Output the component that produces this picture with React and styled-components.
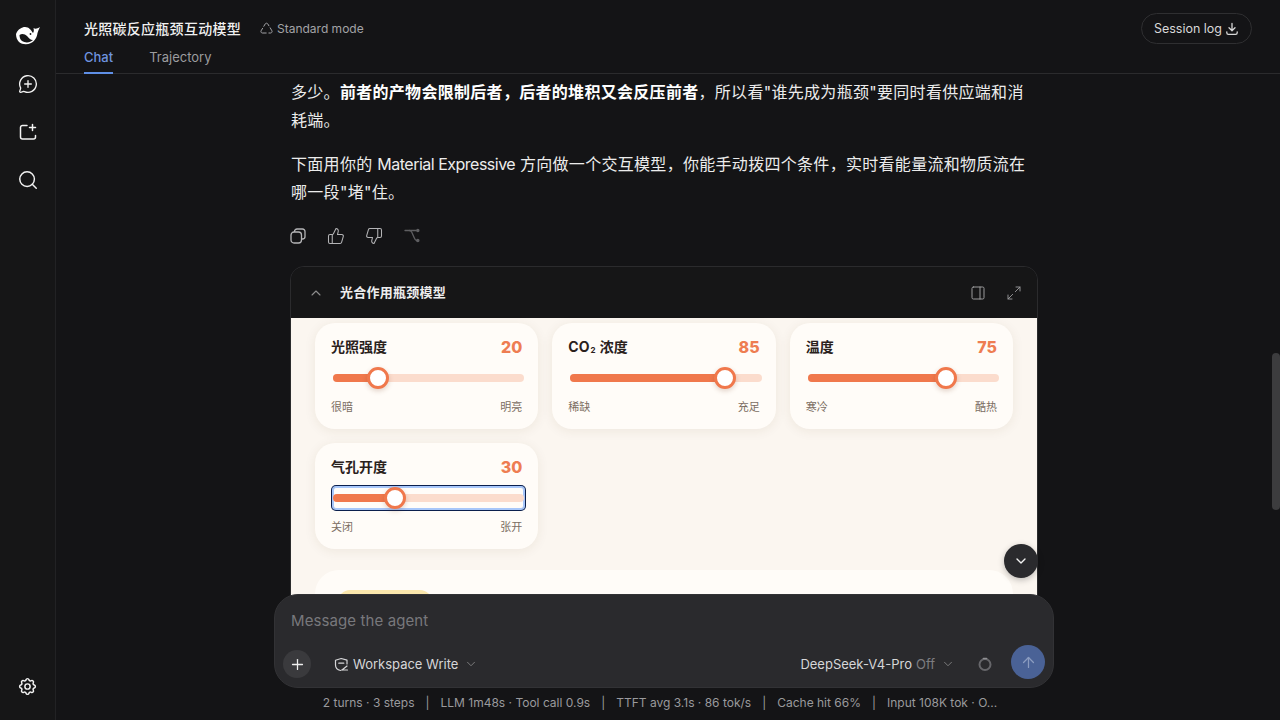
import React from 'react';
import styled, { createGlobalStyle } from 'styled-components';
import {
  MessageCirclePlus, Search, ThumbsUp, ThumbsDown, ChevronUp, ChevronDown,
  PanelRight, Maximize2, Plus, ArrowUp,
} from 'lucide-react';
import { TbSettings } from 'react-icons/tb';

const controls = [
  { title: 'light', label: '光照强度', value: 20, low: '很暗', high: '明亮' },
  { title: 'co2', label: <>CO<sub>2</sub> 浓度</>, value: 85, low: '稀缺', high: '充足' },
  { title: 'temp', label: '温度', value: 75, low: '寒冷', high: '酷热' },
  { title: 'stoma', label: '气孔开度', value: 30, low: '关闭', high: '张开', focused: true },
];

const WhaleLogo = () => (
  <svg width="24" height="18" viewBox="0 0 24 18">
    <path fill="#fff" d="M0 7C2 2 6 0 9 0c4 0 6 3 8 6 1-1 1-3 .5-5 1.500 1 3.500 1 6.500-1-1 2-2 4-2.500 6-.5 4-2.500 8-6.500 10-4 2-9 1.500-12-1C1 13 0 10 0 7z" />
    <path fill="#161617" d="M3.500 8c2.500-2 5.500-1 7.500 1s3 4 6 4c-3 3-8 3-11 1-2-1.500-2.500-4-2.500-6z" />
    <circle cx="14.500" cy="7" r=".9" fill="#161617" />
  </svg>
);

const NewFolderIcon = () => (
  <svg width="18" height="18" viewBox="0 0 18 18" fill="none" stroke="currentColor" strokeWidth="1.500" strokeLinecap="round" strokeLinejoin="round">
    <path d="M8 2.500H3.500a2 2 0 0 0-2 2v9.500a2 2 0 0 0 2 2h11a2 2 0 0 0 2-2v-1.500" />
    <path d="M13.500 1.500v6M10.500 4.500h6" />
  </svg>
);

const ModeIcon = () => (
  <svg width="13" height="13" viewBox="0 0 13 13" fill="none" stroke="currentColor" strokeWidth="1" strokeLinecap="round" strokeLinejoin="round">
    <path d="M3.800 4.300 5.300 1.800c.5-.8 1.900-.8 2.400 0l1.200 2" />
    <path d="M10.200 5.800l1.700 3c.5.900-.2 2.200-1.200 2.200H8.900" />
    <path d="M6.200 11H2.300c-1 0-1.700-1.300-1.200-2.200l1.500-2.500" />
  </svg>
);

const TrayDownIcon = () => (
  <svg width="14" height="14" viewBox="0 0 14 14" fill="none" stroke="currentColor" strokeWidth="1.300" strokeLinecap="round" strokeLinejoin="round">
    <path d="M7 1.500v7M4 5.800 7 8.700l3-2.900" />
    <path d="M1.800 9.800v.9c0 .9.700 1.600 1.600 1.600h7.200c.9 0 1.600-.7 1.600-1.600v-.9" />
  </svg>
);

const CopyIcon = () => (
  <svg width="16" height="16" viewBox="0 0 16 16" fill="none" stroke="currentColor" strokeWidth="1.300" strokeLinejoin="round">
    <rect x="1" y="4" width="10.500" height="11" rx="3" />
    <path d="M4.500 4V3.500A2.500 2.500 0 0 1 7 1h5.500A2.500 2.500 0 0 1 15 3.500v5A2.500 2.500 0 0 1 12.500 11h-1" />
  </svg>
);

const BranchIcon = () => (
  <svg width="16" height="16" viewBox="0 0 16 16" fill="none" stroke="currentColor" strokeWidth="1.300" strokeLinecap="round" strokeLinejoin="round">
    <path d="M1 2.500h4.500c1 0 1.700.6 2.300 1.800l2.300 5.200c.8 2 1.700 3 2.400 3" />
    <path d="M5.500 2.500H12" />
    <circle cx="13.800" cy="2.500" r="1.100" fill="currentColor" />
    <circle cx="13.800" cy="12.500" r="1.100" fill="currentColor" />
  </svg>
);

const ShieldIcon = () => (
  <svg width="15" height="15" viewBox="0 0 15 15" fill="none" stroke="currentColor" strokeWidth="1.200" strokeLinecap="round" strokeLinejoin="round">
    <path d="M6.500 13.500C3.500 12.800 1.500 10.600 1.500 8V3.200L7.200 1.500 13 3.200V7" />
    <path d="M4.800 6.200h5" />
    <path d="M7.500 13h6M13 9l-5 4" />
  </svg>
);

const SpinnerIcon = () => (
  <svg width="16" height="16" viewBox="0 0 16 16" fill="none">
    <circle cx="8" cy="8.500" r="5.500" stroke="#66666a" strokeWidth="2" />
    <path d="M6.500 2.500h3" stroke="#909093" strokeWidth="1.600" strokeLinecap="round" />
  </svg>
);

export default function App() {
  return (
    <>
      <GlobalStyle />
      <Page>
        <Sidebar>
          <SideGroup>
            <SideButton><WhaleLogo /></SideButton>
            <SideButton><MessageCirclePlus size={20} strokeWidth={1.6} /></SideButton>
            <SideButton><NewFolderIcon /></SideButton>
            <SideButton><Search size={22} strokeWidth={1.6} /></SideButton>
          </SideGroup>
          <SideButton><TbSettings size={21} strokeWidth={1.7} /></SideButton>
        </Sidebar>

        <Main>
          <Header>
            <HeaderLeft>
              <TitleRow>
                <Title>光照碳反应瓶颈互动模型</Title>
                <Mode><ModeIcon />Standard mode</Mode>
              </TitleRow>
              <Tabs>
                <Tab $active>Chat</Tab>
                <Tab>Trajectory</Tab>
              </Tabs>
            </HeaderLeft>
            <LogButton>Session log<TrayDownIcon /></LogButton>
          </Header>

          <ChatScroll>
            <Column>
              <Para>多少。<strong>前者的产物会限制后者，后者的堆积又会反压前者</strong>，所以看"谁先成为瓶颈"要同时看供应端和消耗端。</Para>
              <Para>下面用你的 <Latin>Material Expressive</Latin> 方向做一个交互模型，你能手动拨四个条件，实时看能量流和物质流在哪一段"堵"住。</Para>
              <Actions>
                <ActionIcon><CopyIcon /></ActionIcon>
                <ActionIcon><ThumbsUp size={18} strokeWidth={1.4} /></ActionIcon>
                <ActionIcon><ThumbsDown size={18} strokeWidth={1.4} /></ActionIcon>
                <ActionIcon $dim><BranchIcon /></ActionIcon>
              </Actions>

              <Artifact>
                <ArtifactHead>
                  <ArtifactTitle>
                    <ChevronUp size={16} strokeWidth={1.6} color="#8c8c8c" />
                    <span>光合作用瓶颈模型</span>
                  </ArtifactTitle>
                  <ArtifactTools>
                    <PanelRight size={16} strokeWidth={1.5} />
                    <Maximize2 size={16} strokeWidth={1.4} />
                  </ArtifactTools>
                </ArtifactHead>
                <ArtifactBody>
                  <ControlGrid>
                    {controls.map(c => (
                      <ControlCard key={c.title}>
                        <CardTop>
                          <CardTitle>{c.label}</CardTitle>
                          <CardValue>{c.value}</CardValue>
                        </CardTop>
                        <Slider $focused={c.focused}>
                          <Track>
                            <Fill style={{ width: `calc(11px + (100% - 22px) * ${c.value / 100})` }} />
                          </Track>
                          <Thumb style={{ left: `calc(11px + (100% - 22px) * ${c.value / 100})` }} />
                        </Slider>
                        <CardHints><span>{c.low}</span><span>{c.high}</span></CardHints>
                      </ControlCard>
                    ))}
                  </ControlGrid>
                  <ResultCard><Badge /></ResultCard>
                </ArtifactBody>
              </Artifact>
            </Column>
          </ChatScroll>

          <ScrollThumb />
          <ScrollDown><ChevronDown size={16} strokeWidth={2} /></ScrollDown>

          <ComposerDock>
            <Composer>
              <Placeholder>Message the agent</Placeholder>
              <ComposerRow>
                <ComposerSide>
                  <AddButton><Plus size={17} strokeWidth={1.8} /></AddButton>
                  <Picker><ShieldIcon />Workspace Write<ChevronDown size={14} strokeWidth={1.4} color="#8c8c8c" /></Picker>
                </ComposerSide>
                <ComposerSide>
                  <Picker>DeepSeek-V4-Pro <em>Off</em><ChevronDown size={14} strokeWidth={1.4} color="#8c8c8c" /></Picker>
                  <SpinnerSlot><SpinnerIcon /></SpinnerSlot>
                  <SendButton><ArrowUp size={17} strokeWidth={1.8} /></SendButton>
                </ComposerSide>
              </ComposerRow>
            </Composer>
          </ComposerDock>

          <Stats>
            <span>2 turns · 3 steps</span><Sep>|</Sep>
            <span>LLM 1m48s · Tool call 0.9s</span><Sep>|</Sep>
            <span>TTFT avg 3.1s · 86 tok/s</span><Sep>|</Sep>
            <span>Cache hit 66%</span><Sep>|</Sep>
            <span>Input 108K tok · O...</span>
          </Stats>
        </Main>
      </Page>
    </>
  );
}

const GlobalStyle = createGlobalStyle`
  * { box-sizing: border-box; }
  html, body { margin: 0; height: 100%; background: #141416; overflow: hidden; }
  body { font-family: Inter, "Noto Sans CJK SC", sans-serif; text-spacing-trim: space-all; }
`;

const Page = styled.div`
  display: flex;
  width: 1280px;
  height: 720px;
  color: #ececec;
`;

const Sidebar = styled.aside`
  width: 56px;
  flex-shrink: 0;
  display: flex;
  flex-direction: column;
  justify-content: space-between;
  align-items: center;
  padding: 12px 0 10px;
  background: #161617;
  border-right: 1px solid #222224;
`;

const SideGroup = styled.div`
  display: flex;
  flex-direction: column;
  align-items: center;
`;

const SideButton = styled.div`
  width: 48px;
  height: 48px;
  display: flex;
  align-items: center;
  justify-content: center;
  color: #f2f2f2;
`;

const Main = styled.main`
  position: relative;
  flex: 1;
  min-width: 0;
  display: flex;
  flex-direction: column;
`;

const Header = styled.header`
  height: 74px;
  flex-shrink: 0;
  display: flex;
  justify-content: space-between;
  align-items: flex-start;
  padding: 13px 28px 0;
  border-bottom: 1px solid #2b2b2d;
`;

const HeaderLeft = styled.div`
  display: flex;
  flex-direction: column;
`;

const TitleRow = styled.div`
  display: flex;
  align-items: center;
  gap: 19px;
  height: 30px;
`;

const Title = styled.h1`
  margin: 0;
  padding-bottom: 1px;
  font-size: 14px;
  font-weight: 500;
  letter-spacing: .27px;
  color: #f1f1f1;
`;

const Mode = styled.div`
  display: flex;
  align-items: center;
  gap: 4px;
  font-size: 12px;
  color: #a3a3a6;
`;

const Tabs = styled.nav`
  display: flex;
  gap: 36px;
  margin-top: 2px;
`;

const Tab = styled.div`
  height: 29px;
  padding-top: 4px;
  font-size: 13px;
  font-weight: ${p => (p.$active ? 500 : 400)};
  color: ${p => (p.$active ? '#6f93df' : '#9c9c9f')};
  border-bottom: 2px solid ${p => (p.$active ? '#5f8fe6' : 'transparent')};
`;

const LogButton = styled.div`
  display: flex;
  align-items: center;
  gap: 3px;
  height: 31px;
  padding: 0 12px;
  border: 1px solid #2f2f31;
  border-radius: 16px;
  font-size: 12.500px;
  color: #d8d8d8;
`;

const ChatScroll = styled.div`
  flex: 1;
  min-height: 0;
  overflow: hidden;
  padding: 4px 8px 0 0;
`;

const Column = styled.div`
  width: 748px;
  margin: 0 auto;
`;

const Para = styled.p`
  margin: 0 0 16px;
  padding: 0 1px;
  font-size: 16px;
  line-height: 28px;
  letter-spacing: .3px;
  color: #ececec;

  strong { font-weight: 700; color: #fff; }
`;

const Latin = styled.span`
  letter-spacing: -.5px;
`;

const Actions = styled.div`
  display: flex;
  gap: 14px;
  height: 44px;
  margin-left: -4px;
  padding-top: 2px;
`;

const ActionIcon = styled.div`
  width: 24px;
  height: 24px;
  display: flex;
  align-items: center;
  justify-content: center;
  color: ${p => (p.$dim ? '#5f5f62' : '#b4b4b6')};
`;

const Artifact = styled.section`
  border: 1px solid #2b2b2d;
  border-radius: 14px;
  overflow: hidden;
`;

const ArtifactHead = styled.div`
  height: 51px;
  display: flex;
  justify-content: space-between;
  align-items: center;
  padding: 0 15px 0 17px;
  background: #161617;
`;

const ArtifactTitle = styled.div`
  display: flex;
  align-items: center;
  gap: 16px;
  font-size: 13px;
  font-weight: 600;
  letter-spacing: .25px;
  color: #ededed;

  span { padding-bottom: 3px; }
`;

const ArtifactTools = styled.div`
  display: flex;
  align-items: center;
  gap: 20px;
  color: #9a9a9c;
`;

const ArtifactBody = styled.div`
  height: 330px;
  padding: 5px 24px 0;
  background: #fbf6f0;
`;

const ControlGrid = styled.div`
  display: grid;
  grid-template-columns: repeat(3, 1fr);
  gap: 14px;
`;

const ControlCard = styled.div`
  height: 106px;
  padding: 14px 16px;
  background: #fffcf8;
  border-radius: 20px;
  box-shadow: 0 2px 12px rgba(90, 60, 30, .08);
`;

const CardTop = styled.div`
  display: flex;
  justify-content: space-between;
  align-items: center;
  height: 20px;
  margin-bottom: 10px;
`;

const CardTitle = styled.div`
  padding-bottom: 2px;
  font-size: 14px;
  font-weight: 700;
  color: #2a211c;

  sub { font-size: 8px; line-height: 0; vertical-align: -1px; margin: 0 1px; }
`;

const CardValue = styled.div`
  font-size: 16px;
  font-weight: 800;
  color: #ee7d52;
`;

const Slider = styled.div`
  position: relative;
  width: 100%;
  height: 22px;
  margin-left: 2px;
  display: flex;
  align-items: center;
  border-radius: 3px;
  box-shadow: ${p => (p.$focused ? '0 0 0 1px #a8c7fa, 0 0 0 2px #0b1f4d, inset 0 0 0 1px #a8c7fa' : 'none')};
`;

const Track = styled.div`
  position: relative;
  width: 100%;
  height: 8px;
  border-radius: 4px;
  background: #fbdccd;
  overflow: hidden;
`;

const Fill = styled.div`
  height: 100%;
  background: #f0784c;
`;

const Thumb = styled.div`
  position: absolute;
  top: 50%;
  width: 22px;
  height: 22px;
  transform: translate(-50%, -50%);
  border-radius: 50%;
  background: #fff;
  border: 3px solid #f0784c;
  box-shadow: 0 2px 5px rgba(120, 60, 30, .22);
`;

const CardHints = styled.div`
  display: flex;
  justify-content: space-between;
  margin-top: 10px;
  font-size: 11px;
  line-height: 16px;
  color: #7b6d62;
`;

const ResultCard = styled.div`
  height: 120px;
  margin-top: 21px;
  padding: 20px 23px;
  background: #fffcf8;
  border-radius: 24px;
`;

const Badge = styled.div`
  width: 94px;
  height: 24px;
  border-radius: 12px;
  background: #fbe7ad;
`;

const ScrollThumb = styled.div`
  position: absolute;
  top: 353px;
  right: 0;
  width: 8px;
  height: 157px;
  border-radius: 4px;
  background: #3c3c3e;
`;

const ScrollDown = styled.div`
  position: absolute;
  top: 544px;
  left: 948px;
  width: 34px;
  height: 34px;
  display: flex;
  align-items: center;
  justify-content: center;
  border-radius: 50%;
  background: #2a2a2d;
  color: #f2f2f2;
  box-shadow: 0 2px 6px rgba(0, 0, 0, .25);
`;

const ComposerDock = styled.div`
  position: absolute;
  left: 0;
  right: 8px;
  bottom: 32px;
  display: flex;
  justify-content: center;
`;

const Composer = styled.div`
  width: 780px;
  height: 94px;
  display: flex;
  flex-direction: column;
  justify-content: space-between;
  padding: 15px 8px 8px 8px;
  background: #2a2a2d;
  border: 1px solid #323235;
  border-radius: 24px;
`;

const Placeholder = styled.div`
  padding-left: 8px;
  font-size: 15px;
  letter-spacing: .1px;
  line-height: 22px;
  color: #78787c;
`;

const ComposerRow = styled.div`
  display: flex;
  justify-content: space-between;
  align-items: center;
`;

const ComposerSide = styled.div`
  display: flex;
  align-items: center;
`;

const AddButton = styled.div`
  width: 28px;
  height: 28px;
  margin: 4px 23px 0 0;
  display: flex;
  align-items: center;
  justify-content: center;
  border-radius: 50%;
  background: #3a3a3d;
  color: #eee;
`;

const Picker = styled.div`
  display: flex;
  align-items: center;
  gap: 4px;
  margin-top: 4px;
  font-size: 13px;
  color: #d6d6d8;

  em { font-style: normal; color: #7d7d80; }
  svg:last-child { margin-left: 2px; }
`;

const SpinnerSlot = styled.div`
  display: flex;
  margin: 4px 18px 0 22px;
`;

const SendButton = styled.div`
  width: 34px;
  height: 34px;
  display: flex;
  align-items: center;
  justify-content: center;
  border-radius: 50%;
  background: #4a6296;
  color: #8b9cc0;
`;

const Stats = styled.footer`
  height: 32px;
  flex-shrink: 0;
  display: flex;
  justify-content: center;
  align-items: center;
  padding: 0 16px 4px 0;
  background: #141416;
  font-size: 12px;
  color: #9a9a9d;
`;

const Sep = styled.span`
  margin: 0 11px;
`;
